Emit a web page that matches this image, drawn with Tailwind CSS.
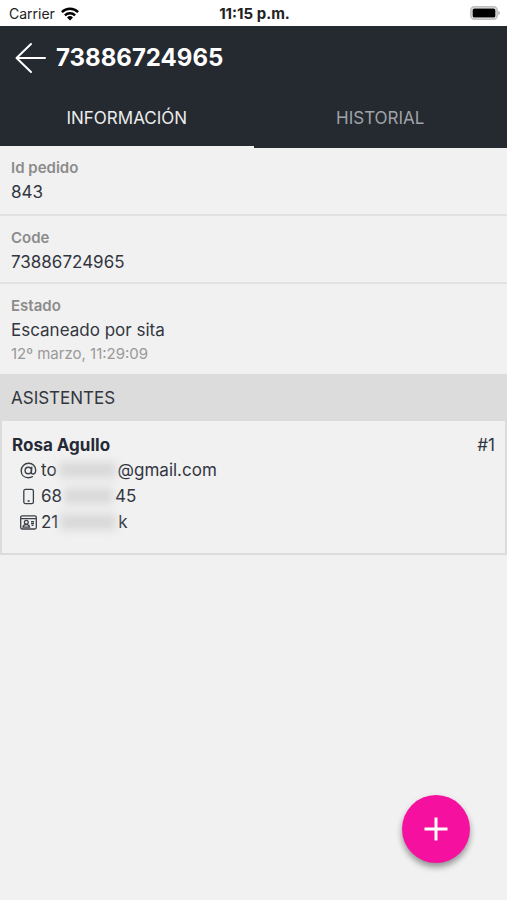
<!DOCTYPE html>
<html lang="es">
<head>
<meta charset="utf-8">
<meta name="viewport" content="width=device-width, initial-scale=1">
<title>73886724965</title>
<script src="https://cdn.jsdelivr.net/npm/@tailwindcss/browser@4"></script>
</head>
<body class="min-h-screen bg-[#f1f1f1] font-['Inter','Liberation_Sans',sans-serif] text-[17px] leading-6 text-[#32363f]">
  <div class="grid h-[26px] grid-cols-3 items-center bg-white pr-[7px] pl-[9px] text-sm text-[#222]">
    <div class="flex items-center gap-1.5 pt-0.5">
      <span>Carrier</span>
      <svg class="h-[14px] w-[18px]" viewBox="0 0 18 14" fill="none" stroke="#000" stroke-width="2.4" aria-hidden="true">
        <path d="M.9 5.1a11.6 11.6 0 0 1 16.2 0M3.9 8.3a7.3 7.3 0 0 1 10.2 0"/>
        <path d="M9 13.6 6 10.5a4.3 4.3 0 0 1 6 0Z" fill="#000" stroke="none"/>
      </svg>
    </div>
    <span class="pt-0.5 text-center text-[15px] font-bold">11:15 p.m.</span>
    <svg class="h-[14px] w-[30px] justify-self-end" viewBox="0 0 30 14" aria-hidden="true">
      <rect x=".9" y=".9" width="26.2" height="12.2" rx="3.6" fill="#fff" stroke="#c0c0c0" stroke-width="1.8"/>
      <rect x="2.6" y="2.4" width="22.8" height="9.2" rx="1.6" fill="#000"/>
      <path d="M28.4 5v4q1.5-.6 1.5-2t-1.5-2Z" fill="#a5a5a5"/>
    </svg>
  </div>

  <header class="bg-[#252a31] text-white">
    <div class="flex h-16 items-center gap-2.5 pl-[15px]">
      <button type="button" aria-label="Volver" class="h-8 w-[31px]">
        <svg class="h-8 w-[31px]" viewBox="0 0 31 32" fill="none" stroke="#fff" stroke-width="2" stroke-linecap="round" stroke-linejoin="round" aria-hidden="true"><path d="M16 2 1.500 16 16 30M1.500 16H30"/></svg>
      </button>
      <h1 class="text-2xl font-bold">73886724965</h1>
    </div>
    <nav class="grid h-[58px] grid-cols-2">
      <a href="#informacion" aria-current="page" class="flex items-center justify-center border-b-2 border-[#f1f1f1] text-[#ececec]">INFORMACIÓN</a>
      <a href="#historial" class="flex items-center justify-center border-b-2 border-[#252a31] text-[#a0a3a7]">HISTORIAL</a>
    </nav>
  </header>

  <main id="informacion">
    <dl>
      <div class="border-b-2 border-[#e2e2e2] px-[11px] pt-2 pb-2.5">
        <dt class="text-[15px] font-semibold text-[#8b8b8b]">Id pedido</dt>
        <dd>843</dd>
      </div>
      <div class="border-b-2 border-[#e2e2e2] px-[11px] pt-2.5 pb-2">
        <dt class="text-[15px] font-semibold text-[#8b8b8b]">Code</dt>
        <dd>73886724965</dd>
      </div>
      <div class="px-[11px] pt-2.5 pb-2">
        <dt class="text-[15px] font-semibold text-[#8b8b8b]">Estado</dt>
        <dd>Escaneado por sita</dd>
        <dd class="text-[15px] text-[#999]">12º marzo, 11:29:09</dd>
      </div>
    </dl>
    <h2 class="bg-[#dcdcdc] px-[11px] pt-3 pb-[11px]">ASISTENTES</h2>
    <section class="border-2 border-t-0 border-[#dcdcdc] px-2.5 pt-3 pb-[18px]">
      <div class="flex justify-between">
        <h3 class="font-bold text-[#252a35]">Rosa Agullo</h3>
        <span>#1</span>
      </div>
      <ul class="pl-2 leading-[26px]">
        <li class="flex items-center">
          <svg class="mr-1 h-[17px] w-[17px]" viewBox="0 0 17 17" fill="none" stroke="#3c4047" stroke-width="1.4" stroke-linecap="round" aria-hidden="true"><circle cx="8.3" cy="8.5" r="3.2"/><path d="M11.8 5.2 11.3 10c-.1 1.4.6 2 1.6 2 1.7 0 2.8-1.7 2.8-4C15.7 4 12.7 1.3 8.7 1.3 4.4 1.3 1.2 4.4 1.2 8.7s3 7 7.2 7c1.7 0 3-.4 4-1"/></svg>
          <span>to</span><span class="w-[61px] px-0.5"><span class="block h-4 rounded bg-[#d9d9d9] blur-[4px]"></span></span><span>@gmail.com</span>
        </li>
        <li class="flex items-center">
          <svg class="mr-1 h-[17px] w-[17px]" viewBox="0 0 17 17" fill="none" stroke="#3c4047" stroke-width="1.3" aria-hidden="true"><rect x="3.8" y="1.4" width="9.6" height="14.2" rx="1.6"/><path d="M7.6 13h2" stroke-width="1.6"/></svg>
          <span>68</span><span class="w-[53px] px-0.5"><span class="block h-4 rounded bg-[#d9d9d9] blur-[4px]"></span></span><span>45</span>
        </li>
        <li class="flex items-center">
          <svg class="mr-1 h-[17px] w-[17px]" viewBox="0 0 17 17" fill="none" stroke="#3c4047" stroke-width="1.3" aria-hidden="true"><rect x=".7" y="1.8" width="15.6" height="13.2" rx="1.5"/><path d="M.7 4.6h15.6M11 7.6h3M11 9.5h3M11.6 11.4h1.8"/><circle cx="6.3" cy="8.3" r="1.9"/><path d="M3 13.2c.2-1.7 1.6-2.6 3.3-2.6s3.1.9 3.3 2.6Z"/></svg>
          <span>21</span><span class="w-[60px] px-0.5"><span class="block h-4 rounded bg-[#d9d9d9] blur-[4px]"></span></span><span>k</span>
        </li>
      </ul>
    </section>
  </main>

  <button type="button" aria-label="Agregar" class="fixed right-[37px] bottom-[37px] flex size-[68px] items-center justify-center rounded-full bg-[#f5109f] shadow-[0_4px_6px_rgba(0,0,0,0.4)]">
    <svg class="size-6" viewBox="0 0 24 24" stroke="#fff" stroke-width="3" aria-hidden="true"><path d="M12 .5v23M.5 12h23"/></svg>
  </button>
</body>
</html>
